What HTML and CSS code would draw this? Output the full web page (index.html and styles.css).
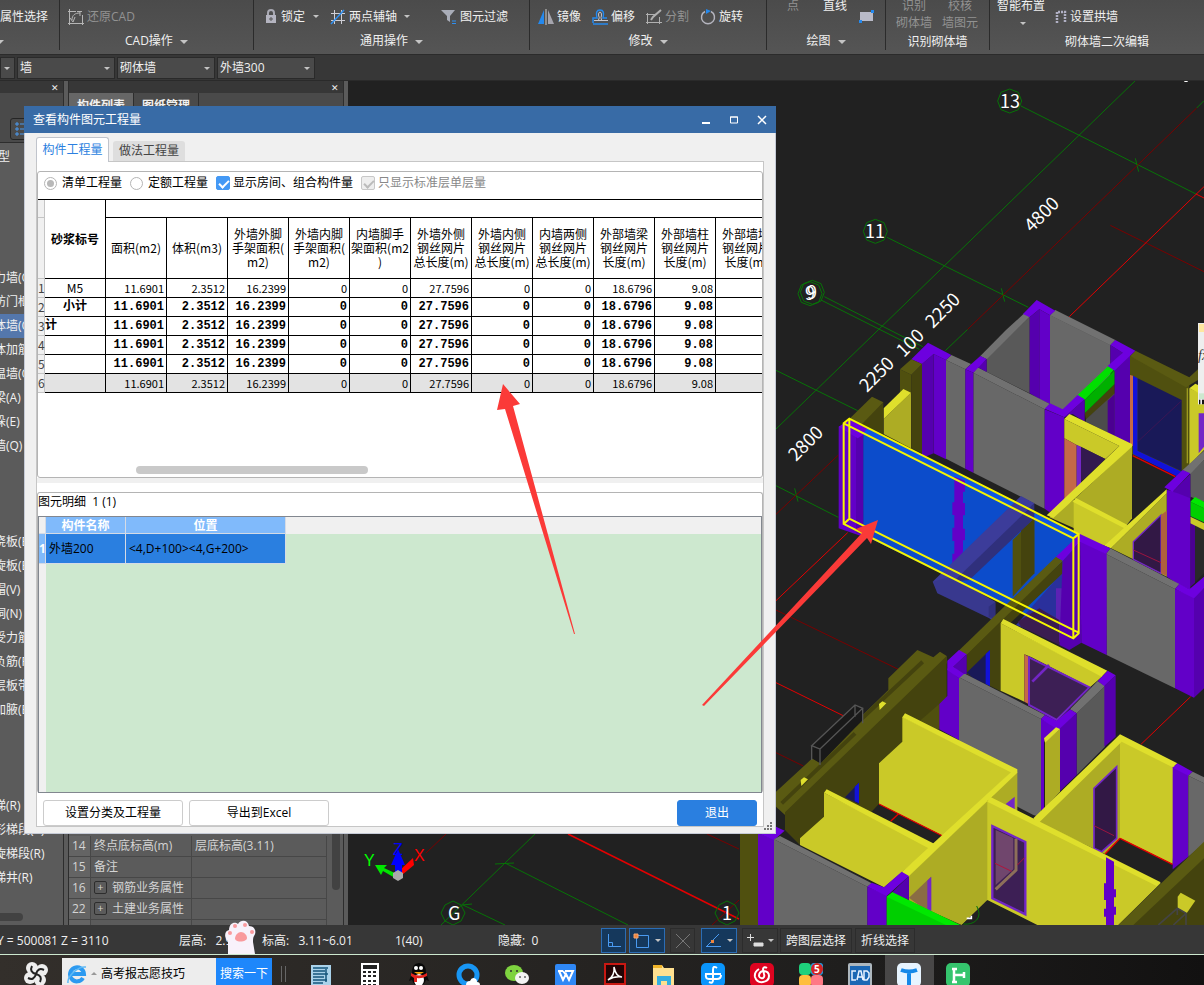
FILE: index.html
```html
<!DOCTYPE html>
<html lang="zh-CN">
<head>
    <meta charset="UTF-8">
    <meta name="viewport" content="width=device-width, initial-scale=1.0">
    <title>查看构件图元工程量</title>
    <link rel="stylesheet" href="styles.css">
</head>
<body>
    <!-- 顶部功能区 -->
    <header class="ribbon">
        <section class="group group-select">
            <div class="tools"><button class="tool">属性选择</button></div>
            <div class="group-title"><i class="caret"></i></div>
        </section>
        <section class="group group-cad">
            <div class="tools">
                <button class="tool" disabled>
                    <svg width="16" height="16" viewBox="0 0 16 16" fill="none" stroke="#b5b5b5" stroke-width="1"><path d="M1.500 0v16M0 2.500h8M0 14.500h16M14.500 6v10M9 2.500h5"/><path d="M4 11c0-5 3-7 8-7M2 9l3 4 2-5M12 2v5"/></svg>
                    还原CAD
                </button>
            </div>
            <div class="group-title">CAD操作 <i class="caret"></i></div>
        </section>
        <section class="group group-common">
            <div class="tools">
                <button class="tool tool-lock">
                    <svg width="12" height="16" viewBox="0 0 12 16"><path d="M3 7V4a3 3 0 0 1 6 0v3" fill="none" stroke="#a9a9b3" stroke-width="2"/><rect x="1" y="6" width="10" height="8" fill="#b4b4c0"/><path d="M6 8v4M4 10h4" stroke="#555"/></svg>
                    锁定 <i class="caret small"></i>
                </button>
                <button class="tool">
                    <svg width="16" height="16" viewBox="0 0 16 16" fill="none"><path d="M4.500 1v14M11.500 1v14M1 4.500h14M1 11.500h14" stroke="#cfcfd6"/><path d="M1 15L14 1" stroke="#2f8ff0" stroke-width="1.500"/></svg>
                    两点辅轴 <i class="caret small"></i>
                </button>
                <button class="tool tool-filter">
                    <svg width="16" height="16" viewBox="0 0 16 16"><path d="M0 1h14L9 7v6l-3-2V7z" fill="#a9adb8"/><path d="M11 12h4M11 14.500h4" stroke="#2f8ff0"/></svg>
                    图元过滤
                </button>
            </div>
            <div class="group-title">通用操作 <i class="caret"></i></div>
        </section>
        <section class="group group-modify">
            <div class="tools">
                <button class="tool">
                    <svg width="16" height="16" viewBox="0 0 16 16"><path d="M6 1v14H0z" fill="#2489ee"/><path d="M10 1v14h6z" fill="#a5a5ae"/><path d="M8 0v16" stroke="#ccc"/></svg>
                    镜像
                </button>
                <button class="tool">
                    <svg width="16" height="16" viewBox="0 0 16 16" fill="none"><path d="M1 14V9h4Q3 1 8 1t3 8h4M1 15h15" stroke="#2489ee" stroke-width="1.500"/><path d="M2 11.500h14M6.500 11Q8 9 6.500 6q0-3 1.500-3t1.500 3q-1 3 0 5" stroke="#c8c8d0"/></svg>
                    偏移
                </button>
                <button class="tool" disabled>
                    <svg width="16" height="16" viewBox="0 0 16 16" fill="none" stroke="#b0b0b0"><path d="M1.500 4v11M0 5.500h9M0 13.500h16M13.500 8v7"/><path d="M5 11l2-3 8-7" stroke-width="2"/></svg>
                    分割
                </button>
                <button class="tool">
                    <svg width="16" height="16" viewBox="0 0 16 16" fill="none"><path d="M11 2.500a6.500 6.500 0 1 1-6 0" stroke="#b4b4be" stroke-width="1.500"/><path d="M6 0l5 2-5 3z" fill="#2489ee"/></svg>
                    旋转
                </button>
            </div>
            <div class="group-title">修改 <i class="caret"></i></div>
        </section>
        <section class="group group-draw">
            <div class="tools">
                <button class="tool tall" disabled>点</button>
                <button class="tool tall">直线</button>
                <button class="tool" aria-label="矩形">
                    <svg width="16" height="16" viewBox="0 0 16 16"><rect x="1" y="3" width="13" height="9" fill="#b9bac8"/><path d="M12 1h3v3h-3zM0 11h3v3H0z" fill="#2489ee"/></svg>
                </button>
            </div>
            <div class="group-title">绘图 <i class="caret"></i></div>
        </section>
        <section class="group group-detect">
            <div class="tools">
                <button class="tool tall" disabled>识别<br>砌体墙</button>
                <button class="tool tall" disabled>校核<br>墙图元</button>
            </div>
            <div class="group-title low">识别砌体墙</div>
        </section>
        <section class="group group-edit">
            <div class="tools">
                <button class="tool tall">智能布置<br><i class="caret small"></i></button>
                <button class="tool">
                    <svg width="12" height="14" viewBox="0 0 12 14"><path d="M2 13V2h8v11" fill="none" stroke="#b0b0c4" stroke-width="2.500" stroke-dasharray="2 1"/></svg>
                    设置拱墙
                </button>
            </div>
            <div class="group-title low">砌体墙二次编辑</div>
        </section>
    </header>

    <nav class="selector-bar">
        <label class="selector selector-floor"><select aria-label="楼层"><option></option></select></label>
        <label class="selector"><select aria-label="类别"><option>墙</option></select></label>
        <label class="selector"><select aria-label="构件类型"><option>砌体墙</option></select></label>
        <label class="selector"><select aria-label="构件"><option>外墙300</option></select></label>
    </nav>

    <main class="workspace">
        <!-- 左侧构件导航 -->
        <aside class="nav-panel">
            <div class="panel-head"><button class="panel-close" aria-label="关闭">✕</button></div>
            <div class="nav-tools">
                <button class="view-button" aria-label="列表">
                    <svg width="16" height="14" viewBox="0 0 16 14" stroke="#4a9af0" fill="none"><path d="M1 1h2v2H1zM1 6h2v2H1zM1 11h2v2H1zM5 2h9M5 7h9M5 12h9"/></svg>
                </button>
            </div>
            <div class="nav-title">常用类型</div>
            <ul class="nav-list">
                <li>剪力墙(Q)</li>
                <li>人防门框墙</li>
                <li class="active">砌体墙(Q)</li>
                <li>砌体加筋(Y)</li>
                <li>保温墙(Q)</li>
                <li>暗梁(A)</li>
                <li>墙垛(E)</li>
                <li>幕墙(Q)</li>
            </ul>
            <ul class="nav-list">
                <li>现浇板(B)</li>
                <li>螺旋板(B)</li>
                <li>柱帽(V)</li>
                <li>板洞(N)</li>
                <li>板受力筋(S)</li>
                <li>板负筋(F)</li>
                <li>楼层板带(H)</li>
                <li>板加腋(B)</li>
            </ul>
            <ul class="nav-list">
                <li>楼梯(R)</li>
                <li>直形梯段(R)</li>
                <li>螺旋梯段(R)</li>
                <li>楼梯井(R)</li>
            </ul>
            <div class="nav-scroll"></div>
        </aside>

        <!-- 属性面板 -->
        <aside class="prop-panel">
            <div class="panel-head"><button class="panel-close" aria-label="关闭">✕</button></div>
            <div class="prop-tabs">
                <button class="prop-tab">构件列表</button>
                <button class="prop-tab current">图纸管理</button>
            </div>
            <div class="prop-body">
                <table class="prop-table">
                    <tr><th>14</th><td>终点底标高(m)</td><td>层底标高(3.11)</td></tr>
                    <tr><th>15</th><td>备注</td><td></td></tr>
                    <tr><th>16</th><td><button class="expand">+</button>钢筋业务属性</td><td></td></tr>
                    <tr><th>22</th><td><button class="expand">+</button>土建业务属性</td><td></td></tr>
                    <tr class="cut"><th></th><td></td><td></td></tr>
                </table>
                <div class="prop-scroll"></div>
            </div>
        </aside>

        <!-- 三维视图 -->
        <div class="viewport">
            <svg class="scene" viewBox="348 81 856 844" preserveAspectRatio="xMinYMin slice">
                <!-- 左下轴网 -->
                <g fill="none" stroke="#077307">
                    <path d="M535 834L441 925M505 863l123 62M463 905l42 20M495 864l19-1M462 905l10-1"/>
                    <path d="M568 834l171 85" stroke="#e40000" stroke-width="1.500"/>
                    <path d="M446 834l-20 19M707 834l32 15M739 900l-27 25" stroke="#7a0000"/>
                    <path d="M453 901l8 4 4 8-4 8-8 4-8-4-4-8 4-8zM727 901l8 4 4 8-4 8-8 4-8-4-4-8 4-8z"/>
                </g>
                <!-- 坐标轴 -->
                <path d="M375 865l12 0-3 3 13 6-2 4-12-7-2 4z" fill="#00e600"/>
                <path d="M413 858l-14 13 3 4 12-10z" fill="#f00"/>
                <path d="M398 849l-7 16h4v8h7v-8h3z" fill="#00f"/>
                <path d="M393 873l5-3 5 3v5l-5 3-5-3z" fill="#aaa"/>
                <g class="axis-name">
                    <text x="364" y="866" fill="#0f0">Y</text>
                    <text x="393" y="855" fill="#00f">Z</text>
                    <text x="414" y="861" fill="#f00">X</text>
                </g>

                <svg x="740" y="80" width="464" height="845" viewBox="-108 -600 1392 2535">
                    <!-- 轴线 -->
                    <g fill="none" stroke="#077307" stroke-width="3">
                        <path d="M1080-600L0 447M735-522L1260-258M333-128L757 82M145 50L440 200M135 60L430 208M0 271L245 392M0 617L187 712M575 148L508 212M1262-516L1284-538"/>
                        <path d="M1078-365l10 40M676 25l10 40M56 625l10 40"/>
                        <path d="M701-573l26 10 10 26-10 26-26 10-26-10-10-26 10-26zM298-182l26 10 10 26-10 26-26 10-26-10-10-26 10-26zM102 5l26 10 10 26-10 26-26 10-26-10-10-26 10-26zM109 1l26 10 10 26-10 26-26 10-26-10-10-26 10-26z"/>
                        <path d="M1262-516L575 148M187 525L0 703M1003-164L1284-25M0 990l367 178M0 1418l82 40" stroke="#7a0000"/>
                        <path d="M1284-280L880 110M1260-258L1284-246M215 758L0 962M0 1208l232 114M1244 1250l-149 143" stroke="#e40000"/>
                    </g>
                    <path d="M1222-600h16l-4 6h-8z" fill="#fff"/>

                    <!-- 后排房间 -->
                    <path d="M632 235L761 110V340L632 275z" fill="#595959"/>
                    <path d="M613 228L690 150 745 100 761 110 632 238z" fill="#717171"/>
                    <path d="M822 105L1003 195V300L860 390 822 372z" fill="#686868"/>
                    <path d="M838 90L1018 180 1003 196 822 106z" fill="#717171"/>
                    <path d="M782 60L838 92 822 106 790 88 761 112 741 102z" fill="#6d00df"/>
                    <path d="M761 112L790 88V357L761 340z" fill="#5500ae"/>
                    <path d="M790 88L822 106V372L790 357z" fill="#6200c8"/>
                    <path d="M592 278L806 388V686L592 578zM510 240L568 268V566L510 536z" fill="#686868"/>
                    <path d="M605 262L822 372 806 388 592 278zM526 225L585 252 568 268 510 240z" fill="#717171"/>
                    <path d="M605 262L632 238V276z" fill="#5500ae"/>
                    <path d="M568 268L613 228 632 237 592 278z" fill="#6d00df"/>
                    <path d="M568 268L592 278V578L568 566zM473 222L510 240V538L473 520z" fill="#6200c8"/>
                    <path d="M438 252L473 222V520L438 535z" fill="#5500ae"/>
                    <path d="M456 188L526 225 510 240 473 222 438 252 406 238z" fill="#6d00df"/>
                    <path d="M372 268L406 284V505L372 490z" fill="#50500f"/>
                    <path d="M406 284L438 252V520L406 505z" fill="#44430e"/>
                    <path d="M406 238L438 252 406 284 372 268z" fill="#5a5a12"/>
                    <path d="M323 417L405 338V505L323 462z" fill="#adac24"/>
                    <path d="M382 327L405 338 323 417V385z" fill="#dfdf2c"/>
                    <path d="M322 367V462L255 432z" fill="#44430e"/>
                    <path d="M288 350L322 367 255 435 222 415z" fill="#5a5a12"/>

                    <!-- 右上门窗 -->
                    <path d="M1062 228L1240 300V560L1215 590 1062 520z" fill="#50500f"/>
                    <path d="M1078 212L1240 292 1266 268V300L1230 322 1062 228z" fill="#5a5a12"/>
                    <path d="M1062 285l9 2v212l-9-4z" fill="#c46947"/>
                    <path d="M1071 287L1085 295V512L1217 575 1205 590 1071 522z" fill="#1212d8"/>
                    <path d="M1085 295L1217 360V574L1085 512z" fill="#191958"/>
                    <path d="M1085 485L1217 362" stroke="#4b1452" stroke-width="2"/>
                    <path d="M1240 325L1284 345V510L1240 555z" fill="#cac928"/>
                    <path d="M1234 325v225" stroke="#9c9b20" stroke-width="4"/>
                    <path d="M1240 325l18-14 26 12v25z" fill="#dfdf2c"/>
                    <path d="M1268 400h16v100l-16 20z" fill="#7326c6"/>
                    <path d="M1070 527L1198 590 1070 712z" fill="#212121"/>
                    <path d="M1070 527L1198 590" stroke="#e40000" stroke-width="4"/>
                    <path d="M926 400L1016 312V345L930 418z" fill="#44430e"/>
                    <path d="M930 418L1016 340V468L930 425z" fill="#4c4c4c"/>
                    <path d="M995 362L1016 342V468L995 460z" fill="#4b0091"/>
                    <path d="M926 360L1016 270V312L926 400z" fill="#00b000"/>
                    <path d="M997 258L1016 268 926 360 905 345z" fill="#00e000"/>
                    <path d="M1003 195L1040 218 1003 258zM1016 272L1062 226V490L1016 470z" fill="#5500ae"/>
                    <path d="M1018 180L1078 212 1016 272 995 258 1040 218 1003 195z" fill="#6d00df"/>
                    <path d="M806 388L865 412V670L820 696 806 686z" fill="#6200c8"/>
                    <path d="M865 412L926 358V425L890 402z" fill="#5500ae"/>
                    <path d="M822 370L860 388 905 345 926 358 865 412 806 386z" fill="#6d00df"/>

                    <!-- 中部黄色隔墙 -->
                    <path d="M865 417L1030 498 988 537 902 495 865 475z" fill="#cac928"/>
                    <path d="M865 475L902 495V625L865 660z" fill="#c46947"/>
                    <path d="M902 495L915 500V615L902 625z" fill="#7326c6"/>
                    <path d="M915 500L988 537 915 605z" fill="#33194f"/>
                    <path d="M1068 497V715L1050 738 895 658z" fill="#adac24"/>
                    <path d="M820 712L895 658V745z" fill="#adac24"/>
                    <path d="M893 662L1050 740 1000 800 893 775z" fill="#cac928"/>
                    <path d="M880 402L1068 492V500L832 714 812 706 1030 498 865 417zM900 654L1055 735 1045 745 890 665z" fill="#dfdf2c"/>

                    <!-- 右侧 -->
                    <path d="M1243 580L1284 540V665L1243 650z" fill="#5d5d5d"/>
                    <path d="M1220 570L1284 512V540L1243 582z" fill="#717171"/>
                    <path d="M1243 705L1284 725V880L1243 920z" fill="#292929"/>
                    <path d="M1243 720l14 8v180l-14 12z" fill="#4b0091"/>
                    <path d="M1243 710l41 20v20l-41-20z" fill="#cac928"/>
                    <path d="M1243 665L1284 685V727L1243 708z" fill="#00cf00"/>
                    <path d="M1243 665l14-14 27 14v20z" fill="#00e800"/>
                    <path d="M1172 630L1243 640V930L1210 915 1172 890z" fill="#6200c8"/>
                    <path d="M1190 635L1243 582V655L1205 640z" fill="#5500ae"/>
                    <path d="M1220 570L1243 580 1190 635 1165 622z" fill="#6d00df"/>
                    <path d="M1172 640V890L1072 838 1005 805z" fill="#adac24"/>
                    <path d="M1072 785L1155 705V880L1072 838z" fill="#321845" stroke="#7326c6" stroke-width="4"/>
                    <path d="M1072 810L1155 848" stroke="#9b1440" stroke-width="3"/>
                    <path d="M1155 705L1172 692V888L1155 880z" fill="#b0603e"/>
                    <path d="M1172 628V640L1005 805 985 797z" fill="#dfdf2c"/>
                    <path d="M990 822L1197 927V1225L992 1125z" fill="#686868"/>
                    <path d="M1003 805L1210 912 1197 927 990 822z" fill="#717171"/>
                    <path d="M1197 927L1254 950V1253L1197 1225z" fill="#6200c8"/>
                    <path d="M1254 950L1284 925V1225L1254 1253z" fill="#5500ae"/>
                    <path d="M1210 912L1240 928 1284 890V925L1254 955 1197 927z" fill="#6d00df"/>

                    <!-- 选中的外墙 -->
                    <path d="M188 440L222 425 262 455V770L188 745z" fill="#6200c8"/>
                    <path d="M240 455l22 5v300h-22z" fill="#5500ae"/>
                    <path d="M188 440L222 418 285 450 245 475z" fill="#6d00df"/>
                    <path d="M262 460L892 775V1075L262 765z" fill="#0c4ccb"/>
                    <path d="M275 445L905 762 892 777 262 460z" fill="#0e58e4"/>
                    <path d="M535 590l32 12v33h-6v34h6v37h-6v40h6v35h-6v35l-32 45v-40h6v-38h-6v-40h6v-38h-6v-38h6z" fill="#6200c8"/>
                    <path d="M710 780L775 715V880L710 950z" fill="#50500f"/>
                    <path d="M735 750l40-35v165l-40 38z" fill="#44430e"/>
                    <path d="M775 670V715L580 900 520 905z" fill="#30307c"/>
                    <path d="M735 648L775 670 525 912 470 905z" fill="#3c3c9a"/>
                    <path d="M470 905L525 890 658 965V1030L640 1015 484 940z" fill="#38388e"/>
                    <path d="M638 980l20-14v50l-20-5z" fill="#30307c"/>
                    <path d="M860 875V1090L720 1035z" fill="#2a309c"/>
                    <path d="M840 925h20v165l-20-10z" fill="#5c22b4"/>
                    <path d="M725 1025L790 985 850 1020V1095L735 1040z" fill="#3a1c50"/>
                    <path d="M860 842V880L700 1032 680 1230 572 1180V1110z" fill="#44430e"/>
                    <path d="M840 830L860 842 572 1125 548 1112z" fill="#5a5a12"/>
                    <path d="M860 842L912 785 916 1088 880 1110 850 1095z" fill="#5500ae"/>
                    <path d="M912 775L992 822V1125L916 1088z" fill="#6200c8"/>
                    <path d="M912 762L1003 805 990 822 912 785 860 842 840 830z" fill="#6d00df"/>
                    <g fill="none" stroke="#f5f500" stroke-width="6">
                        <path d="M203 430L220 416 908 762V1060L892 1075 203 732zM203 430L892 775V1075M892 775L908 762M220 416V716L908 1058M203 732L220 716"/>
                    </g>

                    <!-- 下部楼层 -->
                    <g transform="translate(-108 960)">
                        <path d="M680 165L785 62V275L680 222z" fill="#44430e"/>
                        <path d="M680 218L750 150V258L700 235z" fill="#191958"/>
                        <path d="M737 162L750 150V258L737 252z" fill="#1212d8"/>
                        <path d="M532 150L580 172 600 155 620 168V190L135 645 108 620V575L217 475 238 488 368 345 445 270V235z" fill="#5a5a12"/>
                        <path d="M620 168V295L598 385 417 490V612L395 635 180 735 135 690V637z" fill="#44430e"/>
                        <path d="M598 312V390L540 362z" fill="#50500f"/>
                        <path d="M548 185L345 375M345 400L125 610" stroke="#44430e" stroke-width="12"/>
                        <path d="M417 312l10-8 12 6-20 20zM182 540l10-8 12 6-20 20z" fill="#dfdf2c"/>
                        <path d="M215 437L345 315 368 325V360L242 490 215 475z" fill="#191919"/>
                        <path d="M215 437L345 315 368 325 240 447zM215 437V480M240 447V495M345 315V350M368 325V370" fill="none" stroke="#555" stroke-width="4"/>

                        <path d="M782 70L1088 228 1050 262 875 172 853 163V305L782 272z" fill="#cac928"/>
                        <path d="M790 57L1102 212 1085 230 782 70z" fill="#dfdf2c"/>
                        <path d="M853 163l14 8v142l-14-8z" fill="#c46947"/>
                        <path d="M867 172L1048 262 950 360 867 315z" fill="#3d1f55" stroke="#7326c6" stroke-width="6"/>
                        <path d="M877 245l50-50" stroke="#7326c6" stroke-width="8"/>
                        <path d="M657 232L903 357V652L880 645 657 530z" fill="#686868"/>
                        <path d="M672 220L915 345 903 357 657 232z" fill="#717171"/>
                        <path d="M622 205L657 235V420L598 388V312L622 288z" fill="#6200c8"/>
                        <path d="M640 200L680 163V222H665z" fill="#5500ae"/>
                        <path d="M657 150L680 163 640 200 672 222 657 235 622 210V182z" fill="#6d00df"/>
                        <path d="M1010 340L1095 258V440L1010 525z" fill="#595959"/>
                        <path d="M1073 243L1095 258 1010 340 990 328z" fill="#717171"/>
                        <path d="M1093 258L1127 226V410L1093 440zM955 388L1010 340V525L958 575z" fill="#5500ae"/>
                        <path d="M903 357L958 385 912 425V630L903 630z" fill="#6200c8"/>
                        <path d="M1103 212L1127 226 1093 258 1073 243zM915 345L950 362 990 328 1010 340 955 390 903 357z" fill="#6d00df"/>
                        <path d="M915 425L960 387V575L915 625z" fill="#adac24"/>
                        <path d="M948 382L960 387 915 428 912 415z" fill="#dfdf2c"/>

                        <path d="M398 632L417 612 608 708 585 732z" fill="#212121"/>
                        <path d="M487 350L815 515 610 708 417 612V490L487 425z" fill="#cac928"/>
                        <path d="M417 612L608 708M475 642L452 664" stroke="#e40000" stroke-width="4"/>
                        <path d="M745 600L832 515V632L810 628z" fill="#adac24"/>
                        <path d="M797 612L824 590V630z" fill="#7326c6"/>
                        <path d="M315 592L357 548V612z" fill="#191958"/>
                        <path d="M344 560l13-12v62l-13-6z" fill="#1212d8"/>
                        <path d="M252 578L575 742 432 862 180 735V715L252 650z" fill="#cac928"/>
                        <path d="M260 568L590 735 570 747 252 578z" fill="#dfdf2c"/>
                        <path d="M505 828L745 600V900L665 975 507 905z" fill="#adac24"/>
                        <path d="M507 893L573 830V935L545 922z" fill="#8a6c44"/>
                        <path d="M562 842l12-12v104l-12-6z" fill="#7326c6"/>
                        <path d="M495 340L832 508V518L505 830 485 817 812 517 487 352z" fill="#dfdf2c"/>

                        <path d="M0 700H54V975H0z" fill="#50500f"/>
                        <path d="M54 700L102 718V975H54z" fill="#6200c8"/>
                        <path d="M108 680L134 692 102 720 54 700z" fill="#6d00df"/>
                        <path d="M102 718L382 860V975H102z" fill="#686868"/>
                        <path d="M120 708L395 850 382 860 102 718z" fill="#717171"/>
                        <path d="M382 860L440 885V975H382z" fill="#6200c8"/>
                        <path d="M455 878L507 828V900L460 880z" fill="#5500ae"/>
                        <path d="M395 848L432 862 485 815 507 828 440 888 382 860z" fill="#6d00df"/>
                        <path d="M440 890L457 877 660 975H440z" fill="#00cf00"/>
                        <path d="M440 890L457 877 660 975H618z" fill="#00e800"/>

                        <!-- 右侧房间 -->
                        <path d="M885 662L1140 415V715L1095 762z" fill="#adac24"/>
                        <path d="M1140 415L1310 500 1298 793 1140 715z" fill="#cac928"/>
                        <path d="M1140 403L1312 490 1298 502 1145 425 895 670 880 655z" fill="#dfdf2c"/>
                        <path d="M1062 565L1130 500V715L1085 755 1062 745z" fill="#321845" stroke="#7326c6" stroke-width="5"/>
                        <path d="M1062 677l60 30" stroke="#9b1440" stroke-width="3"/>
                        <path d="M1140 715L1298 793 1262 848 1095 762z" fill="#212121"/>
                        <path d="M1140 715L1298 793M1140 715L1095 762" stroke="#e40000" stroke-width="4"/>
                        <path d="M1298 500L1345 525V770L1298 808z" fill="#6200c8"/>
                        <path d="M1312 490L1358 515 1345 527 1298 503z" fill="#6d00df"/>
                        <path d="M1345 527L1392 550V730L1345 770z" fill="#686868"/>
                        <path d="M1358 515L1392 532V550L1345 527z" fill="#717171"/>
                        <path d="M742 900L892 975H665z" fill="#212121"/>
                        <path d="M742 600L1100 775 1262 850 1135 975H892L742 900z" fill="#cac928"/>
                        <path d="M750 590L1262 847 1250 858 742 605z" fill="#dfdf2c"/>
                        <path d="M757 678L856 726V943L757 895z" fill="#3d1f55" stroke="#7326c6" stroke-width="7"/>
                        <path d="M767 690L820 714V808L767 855z" fill="#70466d"/>
                        <path d="M828 716V810L767 868" fill="none" stroke="#8d6f5a" stroke-width="9"/>
                        <path d="M765 790l50 24M832 795l22-22" stroke="#b0143c" stroke-width="3"/>
                        <path d="M1098 772L1122 785V868h6v24h-6v28h6v24h-6v31H1098V950h-6v-24h6v-26h-6v-50h6z" fill="#6200c8"/>
                        <path d="M1392 725V975H1135z" fill="#5a5a12"/>
                        <path d="M1392 775V975H1180z" fill="#44430e"/>
                        <path d="M1313 890L1322 878 1366 902 1340 940 1313 925z" fill="#cac928"/>
                        <path d="M1255 975L1312 925 1338 940V975M1312 925V945M1338 940L1300 975" fill="none" stroke="#444" stroke-width="5"/>
                        <path d="M710 918q14 25 0 42-15 15-40 12" fill="none" stroke="#077307" stroke-width="3"/>
                        <path d="M680 955h14v-8" fill="none" stroke="#fff" stroke-width="5"/>
                    </g>
                    <!-- 右侧浮窗边缘 -->
                    <path d="M1266 129h18v244h-18z" fill="#eee"/>
                    <path d="M1269 132h15v24h-15z" fill="#ffe7a0"/>
                    <path d="M1269 340h15v17h-15z" fill="#cde8cf"/>
                    <path d="M1269 359h4v14h-4zM1278 359h6v14h-6z" fill="#111"/>
                </svg>
                <g class="dimension">
                    <text x="1000" y="108">13</text>
                    <text x="865" y="238">11</text>
                    <text x="805" y="300">9</text>
                    <text x="807" y="299">9</text>
                    <text x="448" y="920">G</text>
                    <text x="722" y="920">1</text>
                    <text x="1198" y="360" class="tip-text">fx</text>
                    <text transform="translate(1032 233) rotate(-45)">4800</text>
                    <text transform="translate(933 329) rotate(-45)">2250</text>
                    <text transform="translate(904 358) rotate(-45)">100</text>
                    <text transform="translate(867 393) rotate(-45)">2250</text>
                    <text transform="translate(796 462) rotate(-45)">2800</text>
                </g>
            </svg>
        </div>

        <!-- 工程量对话框 -->
        <section class="dialog" role="dialog" aria-labelledby="dialog-title">
            <div class="title-bar">
                <h1 id="dialog-title">查看构件图元工程量</h1>
                <button class="window-button" aria-label="最小化"><svg width="10" height="10"><path d="M1 8h8" stroke="#fff" stroke-width="2"/></svg></button>
                <button class="window-button" aria-label="最大化"><svg width="10" height="10"><path d="M1.500 2v6h7V2zM1 2h8" fill="none" stroke="#fff"/></svg></button>
                <button class="window-button" aria-label="关闭"><svg width="10" height="10"><path d="M1 1l8 8M9 1L1 9" stroke="#fff" stroke-width="1.500"/></svg></button>
            </div>
            <div class="tabs">
                <button class="tab current">构件工程量</button>
                <button class="tab">做法工程量</button>
            </div>
            <div class="page">
                <div class="pane quantity-pane">
                    <div class="options">
                        <label><input type="radio" name="kind" checked>清单工程量</label>
                        <label><input type="radio" name="kind">定额工程量</label>
                        <label><input type="checkbox" checked>显示房间、组合构件量</label>
                        <label class="off"><input type="checkbox" checked disabled>只显示标准层单层量</label>
                    </div>
                    <div class="quantity-scroll">
                        <table class="quantity">
                            <colgroup><col class="index-col"><col span="12"></colgroup>
                            <thead>
                                <tr class="band"><th class="index"></th><th rowspan="2" class="grade">砂浆标号</th><th colspan="11"></th></tr>
                                <tr class="names">
                                    <th class="index"></th>
                                    <th>面积(m2)</th>
                                    <th>体积(m3)</th>
                                    <th>外墙外脚<br>手架面积(<br>m2)</th>
                                    <th>外墙内脚<br>手架面积(<br>m2)</th>
                                    <th>内墙脚手<br>架面积(m2<br>)</th>
                                    <th>外墙外侧<br>钢丝网片<br>总长度(m)</th>
                                    <th>外墙内侧<br>钢丝网片<br>总长度(m)</th>
                                    <th>内墙两侧<br>钢丝网片<br>总长度(m)</th>
                                    <th>外部墙梁<br>钢丝网片<br>长度(m)</th>
                                    <th>外部墙柱<br>钢丝网片<br>长度(m)</th>
                                    <th>外部墙墙<br>钢丝网片<br>长度(m)</th>
                                </tr>
                            </thead>
                            <tbody>
                                <tr><th class="index">1</th><td class="name">M5</td><td>11.6901</td><td>2.3512</td><td>16.2399</td><td>0</td><td>0</td><td>27.7596</td><td>0</td><td>0</td><td>18.6796</td><td>9.08</td><td></td></tr>
                                <tr class="sum"><th class="index">2</th><td class="name">小计</td><td>11.6901</td><td>2.3512</td><td>16.2399</td><td>0</td><td>0</td><td>27.7596</td><td>0</td><td>0</td><td>18.6796</td><td>9.08</td><td></td></tr>
                                <tr class="sum"><th class="index">3</th><td class="name start">计</td><td>11.6901</td><td>2.3512</td><td>16.2399</td><td>0</td><td>0</td><td>27.7596</td><td>0</td><td>0</td><td>18.6796</td><td>9.08</td><td></td></tr>
                                <tr class="sum"><th class="index">4</th><td></td><td>11.6901</td><td>2.3512</td><td>16.2399</td><td>0</td><td>0</td><td>27.7596</td><td>0</td><td>0</td><td>18.6796</td><td>9.08</td><td></td></tr>
                                <tr class="sum"><th class="index">5</th><td></td><td>11.6901</td><td>2.3512</td><td>16.2399</td><td>0</td><td>0</td><td>27.7596</td><td>0</td><td>0</td><td>18.6796</td><td>9.08</td><td></td></tr>
                                <tr class="total"><th class="index">6</th><td></td><td>11.6901</td><td>2.3512</td><td>16.2399</td><td>0</td><td>0</td><td>27.7596</td><td>0</td><td>0</td><td>18.6796</td><td>9.08</td><td></td></tr>
                            </tbody>
                        </table>
                    </div>
                    <div class="scroll-thumb"></div>
                </div>
                <div class="splitter"></div>
                <div class="pane detail-pane">
                    <div class="detail-title">图元明细&nbsp; 1 (1)</div>
                    <div class="detail-box">
                        <table class="detail">
                            <tr><th class="index"></th><th class="part">构件名称</th><th class="place">位置</th></tr>
                            <tr class="picked"><th class="index">1</th><td>外墙200</td><td>&lt;4,D+100&gt;&lt;4,G+200&gt;</td></tr>
                        </table>
                    </div>
                </div>
                <div class="actions">
                    <button class="action">设置分类及工程量</button>
                    <button class="action">导出到Excel</button>
                    <button class="action primary">退出</button>
                </div>
            </div>
            <svg class="grip" width="9" height="9" fill="#777"><path d="M6 0h2v2H6zM3 3h2v2H3zM6 3h2v2H6zM0 6h2v2H0zM3 6h2v2H3zM6 6h2v2H6z"/></svg>
        </section>

        <!-- 红色指示箭头 -->
        <svg class="arrows" viewBox="0 81 1204 844" preserveAspectRatio="xMinYMin meet" fill="#fb3a38">
            <path d="M503 384l17 20-7 2 62 228h-1L505 409l-8 1z"/>
            <path d="M878 520l-7 24-4-6-163 168-2-1 160-172-6-4z"/>
        </svg>
    </main>

    <!-- 状态栏 -->
    <footer class="status-bar">
        <div class="status-text">
            <span class="coords">Y = 500081 Z = 3110</span>
            <span>层高:&nbsp;&nbsp; 2.9</span>
            <span>标高:&nbsp;&nbsp; 3.11~6.01</span>
            <span>1(40)</span>
            <span>隐藏:&nbsp; 0</span>
        </div>
        <button class="mode on" aria-label="正交"><svg width="16" height="16" fill="none" stroke="#4a9af0"><path d="M2.500 1v12.500H15M2.500 9.500h4v4"/></svg></button>
        <button class="mode on wide" aria-label="捕捉"><svg width="18" height="16" fill="none" stroke="#4a9af0"><path d="M3.500 2.500h12v12h-12z"/><path d="M1 1h4v4H1z" fill="#f0853c" stroke="#f5a570"/></svg><i class="caret small"></i></button>
        <button class="mode" aria-label="交点"><svg width="16" height="16" stroke="#777"><path d="M1 1l14 14M15 1L1 15"/></svg></button>
        <button class="mode on wide" aria-label="角度"><svg width="18" height="16" stroke="#4a9af0"><path d="M1 13.500h15M2 13L14 1"/><path d="M6 7h3v3H6z" fill="#f0853c" stroke="none"/></svg><i class="caret small"></i></button>
        <button class="mode wide" aria-label="动态输入"><svg width="18" height="16" stroke="#ddd"><path d="M1 4.500h7M4.500 1v7"/><path d="M8 10h9v3H8z" fill="#ddd"/></svg><i class="caret small"></i></button>
        <button class="mode label">跨图层选择</button>
        <button class="mode label">折线选择</button>
        <svg class="paw" width="32" height="34" viewBox="0 0 32 34">
            <path d="M3 34V21C-1 18-1 11 4 10 4 3 10 1 13 4c3-5 10-4 11 2 6 0 8 6 5 10-1 2-1 3-1 6l2 12z" fill="#f8f2fb"/>
            <path d="M10 19c0-4 3-7 6-7s6 3 6 6c0 4-10 5-12 1z" fill="#f99a9d"/>
            <circle cx="5" cy="13" r="2" fill="#f99a9d"/><circle cx="10" cy="6" r="2" fill="#f99a9d"/><circle cx="20" cy="5" r="2" fill="#f99a9d"/><circle cx="27" cy="12" r="2" fill="#f99a9d"/>
        </svg>
    </footer>

    <!-- 任务栏 -->
    <div class="taskbar">
        <a href="#" class="launcher" aria-label="浏览器"><svg width="24" height="24" viewBox="0 0 24 24" fill="#eee"><circle cx="8" cy="6" r="6"/><circle cx="18" cy="8" r="6"/><circle cx="16" cy="18" r="6"/><circle cx="6" cy="16" r="6"/><path d="M12 12Q5 10 8 4M12 12q2-7 8-4M12 12q7 2 4 8M12 12q-2 7-8 4" fill="none" stroke="#222" stroke-width="2"/></svg></a>
        <form class="search">
            <svg width="20" height="20" viewBox="0 0 20 20" fill="none"><path d="M16 13a7 7 0 1 1 1-4H5" stroke="#2c9af0" stroke-width="4"/><path d="M1 18C0 12 10 1 19 2" stroke="#5cb8f5" stroke-width="1.500"/></svg>
            <i class="up"></i>
            <input type="text" value="高考报志愿技巧" aria-label="搜索">
            <button type="button">搜索一下</button>
        </form>
        <div class="divider"></div>
        <div class="apps">
            <a href="#" aria-label="编辑器"><svg width="24" height="24" viewBox="0 0 24 24"><path d="M2 2h20v20H2z" fill="#a9d2ea"/><path d="M4 5h15M4 8h12M4 11h15M4 14h11M4 17h14M4 20h10M17 6v13" stroke="#14567c" stroke-width="1.500"/></svg></a>
            <a href="#" aria-label="计算器"><svg width="24" height="24" viewBox="0 0 24 24"><path d="M3 0h18v24H3z" fill="#fff"/><path d="M5 2h14v4H5zM5 8h3v2H5zM10 8h3v2h-3zM15 8h3v2h-3zM5 12h3v2H5zM10 12h3v2h-3zM15 12h3v2h-3zM5 17h3v2H5zM10 17h3v2h-3zM15 17h3v2h-3zM5 21h3v2H5zM10 21h3v2h-3zM15 21h3v2h-3z" fill="#222"/></svg></a>
            <a href="#" aria-label="QQ"><svg width="24" height="24" viewBox="0 0 24 24"><path d="M5 10Q5 0 12 0t7 10l3 8-3-1q-2 6-7 6t-7-6l-3 1z" fill="#080808"/><ellipse cx="12" cy="17" rx="5" ry="6" fill="#fff"/><circle cx="9" cy="5" r="2" fill="#fff"/><circle cx="14" cy="5" r="2" fill="#fff"/><path d="M7 9h10q-5 4-10 0z" fill="#f5a40c"/><path d="M4 10q8 5 16 0v3q-6 3-10 2v4H7v-4l-3-2z" fill="#e2241d"/></svg></a>
            <a href="#" aria-label="QQ浏览器"><svg width="24" height="24" viewBox="0 0 24 24"><circle cx="12" cy="12" r="9" fill="none" stroke="#1896f4" stroke-width="5"/><path d="M10 22q0-4 4-4 2-5 6-2 1 1 1 3 3 0 3 3v2H12z" fill="#fff"/></svg></a>
            <a href="#" aria-label="微信"><svg width="24" height="24" viewBox="0 0 24 24"><ellipse cx="9" cy="10" rx="9" ry="8" fill="#7ed33f"/><circle cx="6" cy="8" r="1" fill="#333"/><circle cx="12" cy="8" r="1" fill="#333"/><ellipse cx="17" cy="15" rx="7" ry="6" fill="#f4f4f4"/><circle cx="15" cy="14" r="1" fill="#666"/><circle cx="20" cy="14" r="1" fill="#666"/></svg></a>
            <a href="#" aria-label="WPS"><svg width="24" height="24" viewBox="0 0 24 24"><rect x="1" y="1" width="21" height="23" rx="2" fill="#2f88f6"/><path d="M4 8h5M5 8l4 9 3-6 3 6 4-9h-8M9 8l3 4" fill="none" stroke="#fff" stroke-width="2"/></svg></a>
            <a href="#" aria-label="PDF"><svg width="24" height="24" viewBox="0 0 24 24"><path d="M2 1h20v20H2z" fill="#230405" stroke="#c81812" stroke-width="2"/><path d="M5 17Q12 13 11 4q2 10 8 10-8-1-14 3z" fill="none" stroke="#fff" stroke-width="1.500"/></svg></a>
            <a href="#" aria-label="资源管理器"><svg width="24" height="24" viewBox="0 0 24 24"><path d="M1 2h9l2 3h10v17H1z" fill="#ffe190"/><path d="M1 2h9v3H1z" fill="#f0b429"/><path d="M5 13h14v11h-4v-6H9v6H5z" fill="#35aee0"/></svg></a>
            <a href="#" aria-label="加加"><svg width="24" height="24" viewBox="0 0 24 24"><rect width="24" height="24" rx="5" fill="#0a95fb"/><path d="M4 11h16M16 5q-4-3-4 2v10q0 4-4 2M5 11q-1 5 3 5h8q4 0 4-4" fill="none" stroke="#fff" stroke-width="2"/></svg></a>
            <a href="#" aria-label="网易云音乐"><svg width="24" height="24" viewBox="0 0 24 24"><rect width="24" height="24" rx="5" fill="#de0420"/><path d="M9 6Q4 9 5 14q2 6 8 5 6-1 6-6 0-5-6-5-4 1-4 5 1 3 4 2 2-1 1-4l-1-5q1-3 4-1" fill="none" stroke="#fff" stroke-width="2"/></svg></a>
            <a href="#" aria-label="消息"><svg width="24" height="24" viewBox="0 0 24 24"><rect width="12" height="12" rx="4" fill="#1ed17c"/><rect x="12" width="12" height="12" rx="3" fill="#229fe5"/><rect y="12" width="12" height="12" rx="4" fill="#ffbe3e"/><rect x="12" y="12" width="12" height="12" rx="4" fill="#ff7985"/><circle cx="18" cy="6" r="6" fill="#d52424"/><text x="15" y="10" class="badge">5</text></svg></a>
            <a href="#" aria-label="CAD"><svg width="24" height="24" viewBox="0 0 24 24"><rect width="24" height="24" rx="2" fill="#adb7be"/><path d="M2 3h20v21H2z" fill="#1b67b4"/><path d="M8 8H4v9h4M9 17l2-9h2l2 9M10 14h4M16 8v9h3l2-3v-4l-2-2z" fill="none" stroke="#e8f2ff" stroke-width="1.500"/></svg></a>
            <a href="#" class="running" aria-label="算量"><svg width="24" height="24" viewBox="0 0 24 24"><rect width="24" height="24" rx="5" fill="#e7f4ff"/><path d="M4 7q8 3 16 0M12 8v16" fill="none" stroke="#1588e8" stroke-width="4"/></svg></a>
            <a href="#" aria-label="计价"><svg width="24" height="24" viewBox="0 0 24 24"><rect width="24" height="24" rx="5" fill="#35c46d"/><path d="M6 6h5M8 6v13M6 19h5M8 12h11M18 9v6" fill="none" stroke="#fff" stroke-width="2.500"/></svg></a>
        </div>
    </div>
</body>
</html>
```
FILE: styles.css
```css
* {
    box-sizing: border-box;
}

body {
    display: flex;
    flex-direction: column;
    height: 100vh;
    margin: 0;
    overflow: hidden;
    background-color: #212121;
    color: #f0f0f0;
    font-family: "Open Sans", "Noto Sans CJK SC", sans-serif;
    font-size: 12px;
    line-height: 16px;
}

button,
input,
select {
    font: inherit;
    color: inherit;
}

button {
    padding: 0;
    border: none;
    background: none;
}

ul {
    margin: 0;
    padding: 0;
    list-style: none;
}

table {
    border-collapse: separate;
    border-spacing: 0;
    table-layout: fixed;
}

/* 下拉小三角 */
.caret {
    display: inline-block;
    margin-left: 4px;
    border: 4px solid transparent;
    border-top-color: #c4c4c4;
    border-bottom: 0;
    vertical-align: middle;
}

.caret.small {
    border-width: 3px;
    border-bottom: 0;
}

/* ### 功能区 ### */
.ribbon {
    display: flex;
    flex: none;
    height: 55px;
    overflow: hidden;
    background: linear-gradient(#4b4b4b, #555);
    border-bottom: 1px solid #2b2b2b;
}

.group {
    flex: none;
    height: 50px;
    border-right: 1px solid #2b2b2b;
}

.group-select { width: 60px; }
.group-cad { width: 194px; }
.group-common { width: 276px; }
.group-modify { width: 237px; }
.group-draw { width: 119px; }
.group-detect { width: 104px; }
.group-edit { flex: 1 0 234px; border-right: none; }

.tools {
    display: flex;
    height: 33px;
    gap: 10px;
}

.group-cad .tools { padding-left: 8px; }
.group-common .tools { gap: 11px; padding-left: 11px; }
.group-modify .tools { gap: 11px; padding-left: 8px; }
.group-draw .tools { gap: 24px; padding-left: 20px; }
.group-draw .tools .tool:last-child { margin-left: -12px; }
.group-detect .tools { padding-left: 10px; }
.group-edit .tools { padding-left: 7px; }

.tool {
    display: flex;
    align-items: center;
    gap: 3px;
    height: 33px;
    white-space: nowrap;
}

.tool-lock {
    gap: 4px;
}

.tool:disabled {
    color: #929292;
}

.tool.tall {
    display: block;
    align-self: flex-start;
    height: auto;
    margin-top: -3px;
    line-height: 17px;
}

.tool-filter {
    margin-left: 20px;
}

.group-title {
    height: 17px;
    text-align: center;
}

.group-select .group-title {
    text-align: left;
}

.group-select .group-title .caret {
    margin-left: -4px;
}

.group-title.low {
    padding-top: 1px;
}

/* ### 楼层构件选择 ### */
.selector-bar {
    display: flex;
    flex: none;
    gap: 2px;
    height: 26px;
    padding-top: 2px;
    background-color: #373737;
    border-bottom: 1px solid #2a2a2a;
}

.selector {
    position: relative;
    width: 98px;
    height: 22px;
}

.selector-floor {
    width: 15px;
}

.selector select {
    appearance: none;
    width: 100%;
    height: 22px;
    padding: 0 2px;
    border: 1px solid #2a2a2a;
    border-radius: 0;
    background-color: #4a4a4a;
}

.selector::after {
    content: "";
    position: absolute;
    top: 10px;
    right: 5px;
    border: 3px solid transparent;
    border-top-color: #c4c4c4;
    border-bottom: 0;
}

/* ### 工作区 ### */
.workspace {
    position: relative;
    display: flex;
    flex: 1;
    min-height: 0;
    background-color: #5b5b5b;
}

.panel-head {
    flex: none;
    height: 12px;
    background-color: #373737;
    text-align: right;
}

.panel-close {
    display: block;
    margin-left: auto;
    padding-right: 4px;
    font-size: 9px;
    line-height: 13px;
}

.nav-panel {
    position: relative;
    flex: none;
    width: 64px;
    overflow: hidden;
    border-right: 1px solid #2d2d2d;
}

.nav-tools {
    height: 50px;
    padding-top: 25px;
    background-color: #4a4a4a;
    border-bottom: 1px solid #2d2d2d;
}

.view-button {
    width: 30px;
    height: 22px;
    margin-left: 10px;
    border: 1px solid #252525;
    border-radius: 3px;
}

.view-button svg {
    display: block;
    margin-left: 4px;
}

.nav-title {
    height: 123px;
    padding-top: 6px;
    text-indent: -38px;
    white-space: nowrap;
}

.nav-list {
    margin-bottom: 72px;
}

.nav-list li {
    height: 24px;
    line-height: 24px;
    text-indent: -18px;
    white-space: nowrap;
}

.nav-list .active {
    background-color: #5477ac;
}

.nav-scroll {
    position: absolute;
    bottom: 4px;
    left: 0;
    width: 23px;
    height: 8px;
    border-radius: 0 4px 4px 0;
    background-color: #424242;
}

.prop-panel {
    display: flex;
    flex: none;
    flex-direction: column;
    width: 276px;
    margin: 0 4px;
    border-left: 1px solid #2d2d2d;
    border-right: 1px solid #2d2d2d;
}

.prop-tabs {
    display: flex;
    flex: none;
    height: 24px;
    background-color: #4a4a4a;
}

.prop-tab {
    width: 65px;
    padding-top: 2px;
    border-right: 1px solid #2d2d2d;
    background-color: #666;
    font-weight: bold;
}

.prop-tab.current {
    background-color: #4a4a4a;
}

.prop-body {
    display: flex;
    flex: 1;
    align-items: flex-end;
    min-height: 0;
    overflow: hidden;
    color: #d4d4d4;
}

.prop-table {
    width: 258px;
}

.prop-table th,
.prop-table td {
    height: 21px;
    padding: 0 0 0 3px;
    border-right: 1px solid #474747;
    border-bottom: 1px solid #474747;
    font-weight: normal;
    text-align: left;
    white-space: nowrap;
}

.prop-table th {
    width: 22px;
    background-color: #646464;
}

.prop-table td:nth-child(2) {
    width: 101px;
}

.prop-table .cut > * {
    height: 5px;
    border-bottom: none;
}

.expand {
    width: 13px;
    height: 13px;
    margin-right: 5px;
    border: 1px solid #2d2d2d;
    border-radius: 2px;
    font-size: 11px;
    line-height: 10px;
    vertical-align: 1px;
}

.prop-scroll {
    align-self: flex-end;
    width: 8px;
    height: 200px;
    margin: 0 0 35px 5px;
    border-radius: 4px;
    background-color: #424242;
}

.viewport {
    flex: 1;
    min-width: 0;
    overflow: hidden;
    background-color: #212121;
}

.scene {
    display: block;
    width: 100%;
    height: 100%;
}

.dimension {
    fill: #fff;
    font-family: "Noto Sans CJK SC", sans-serif;
    font-size: 18px;
}

.dimension .tip-text {
    fill: #333;
    font-family: "Liberation Serif", serif;
    font-size: 14px;
    font-style: italic;
}

.axis-name {
    font-family: "Liberation Sans", sans-serif;
    font-size: 16px;
}

.arrows {
    position: absolute;
    top: 0;
    left: 0;
    width: 100%;
    height: 100%;
    pointer-events: none;
}

/* ### 对话框 ### */
.dialog {
    position: absolute;
    top: 25px;
    bottom: 91px;
    left: 24px;
    display: flex;
    flex-direction: column;
    width: 752px;
    padding: 0 11px 6px;
    border: 1px solid #c5cad6;
    border-top: none;
    background-color: #f0f0f0;
    color: #000;
}

.title-bar {
    display: flex;
    flex: none;
    align-items: center;
    height: 27px;
    margin: 0 -12px;
    padding: 0 5px 0 9px;
    background-color: #386ba6;
    color: #fff;
}

.title-bar h1 {
    margin: 0 auto 0 0;
    font-size: 12px;
    font-weight: normal;
}

.window-button {
    width: 18px;
    height: 18px;
    margin-left: 10px;
}

.window-button svg {
    display: block;
    margin: 0 auto;
}

.tabs {
    display: flex;
    flex: none;
    align-items: flex-end;
    gap: 4px;
    height: 28px;
}

.tab {
    width: 72px;
    height: 20px;
    border-radius: 3px 3px 0 0;
    background-color: #dedede;
    color: #444;
}

.tab.current {
    position: relative;
    z-index: 1;
    width: 73px;
    height: 25px;
    margin-bottom: -1px;
    border: 1px solid #c0c4cc;
    border-bottom: none;
    background-color: #fff;
    color: #2b7fe0;
}

.page {
    display: flex;
    flex: 1;
    flex-direction: column;
    min-height: 0;
    padding-top: 9px;
    border: 1px solid #c6c6c6;
    background-color: #fff;
}

.pane {
    border: 1px solid #b4b4b4;
    border-radius: 3px;
}

.quantity-pane {
    position: relative;
    flex: none;
    height: 307px;
}

.options {
    display: flex;
    gap: 8px;
    height: 27px;
    padding-left: 6px;
}

.options label {
    display: flex;
    align-items: center;
    gap: 5px;
    height: 22px;
}

.options .off {
    color: #888;
}

.options input {
    appearance: none;
    position: relative;
    width: 13px;
    height: 13px;
    margin: 0;
    border: 1px solid #b5b5b5;
    border-radius: 50%;
    background-color: #fff;
}

.options input[type="radio"]:checked::after {
    content: "";
    position: absolute;
    inset: 2px;
    border-radius: 50%;
    background-color: #b8b8b8;
}

.options input[type="checkbox"] {
    width: 14px;
    height: 14px;
    margin-right: -2px;
    border-color: #4499f5;
    border-radius: 2px;
    background-color: #4499f5;
}

.options input[type="checkbox"]:disabled {
    border-color: #c8c8c8;
    background-color: #eee;
}

.options input[type="checkbox"]::after {
    content: "";
    position: absolute;
    top: 1px;
    left: 4px;
    width: 4px;
    height: 8px;
    border: solid #fff;
    border-width: 0 2px 2px 0;
    transform: rotate(45deg);
}

.options input[type="checkbox"]:disabled::after {
    border-color: #bbb;
}

.quantity-scroll {
    overflow: hidden;
}

.quantity {
    width: 739px;
    border-top: 1px solid #000;
    font-family: "Noto Sans CJK SC", sans-serif;
}

.quantity col {
    width: 61px;
}

.quantity .index-col {
    width: 7px;
}

.quantity th,
.quantity td {
    height: 19px;
    padding: 0 2px;
    border-right: 1px solid #000;
    border-bottom: 1px solid #000;
    font-weight: normal;
    line-height: 14px;
    white-space: nowrap;
}

.quantity td {
    font-size: 11px;
    text-align: right;
}

.quantity .sum td {
    font-family: "Liberation Mono", "Noto Sans CJK SC", monospace;
    font-size: 12px;
    font-weight: bold;
}

.quantity .index {
    padding: 0;
    border-color: #c4c4c4;
    background-color: #f0f0f0;
    color: #444;
    font-size: 12px;
}

.quantity .band th {
    height: 18px;
}

.quantity .names th {
    height: 61px;
    padding: 0;
}

.quantity .band .grade {
    font-weight: bold;
}

.quantity td.name {
    font-size: 12px;
    text-align: center;
}

.quantity td.start {
    padding: 0;
    text-align: left;
}

.quantity .total td {
    background-color: #e3e3e3;
}

.scroll-thumb {
    position: absolute;
    bottom: 3px;
    left: 98px;
    width: 232px;
    height: 8px;
    border-radius: 4px;
    background-color: #c9c9c9;
}

.splitter {
    flex: none;
    height: 5px;
    margin-bottom: 9px;
    background-color: #f0f0f0;
}

.detail-pane {
    display: flex;
    flex: 1;
    flex-direction: column;
    min-height: 0;
    border-bottom: none;
}

.detail-title {
    flex: none;
    height: 23px;
    line-height: 18px;
}

.detail-box {
    flex: 1;
    border: 1px solid #82878f;
    background: linear-gradient(#f0f0f0, #f0f0f0) 0 0 / 100% 17px no-repeat, linear-gradient(#f0f0f0, #f0f0f0) 0 0 / 7px 100% no-repeat, #cde8cf;
}

.detail {
    width: 247px;
}

.detail th,
.detail td {
    padding: 0 3px;
    border-right: 1px solid #d5dbe5;
    border-bottom: 1px solid #d5dbe5;
    text-align: left;
    white-space: nowrap;
}

.detail th {
    height: 17px;
    background-color: #80bafb;
    color: #fff;
    line-height: 15px;
    text-align: center;
}

.detail .index {
    width: 7px;
    padding: 0;
}

.detail tr:first-child .index {
    background-color: #f0f0f0;
}

.detail .part {
    width: 80px;
}

.detail td {
    height: 30px;
    background-color: #2a7fe0;
}

.actions {
    display: flex;
    flex: none;
    gap: 6px;
    height: 33px;
    padding: 7px 6px 0;
}

.action {
    width: 140px;
    height: 26px;
    border: 1px solid #ccc;
    border-radius: 3px;
    background-color: #fff;
}

.action.primary {
    width: 80px;
    margin-left: auto;
    border-color: #2a7fe0;
    background-color: #2a7fe0;
    color: #fff;
}

.grip {
    position: absolute;
    right: 2px;
    bottom: 2px;
}

/* ### 状态栏 ### */
.status-bar {
    position: relative;
    display: flex;
    flex: none;
    align-items: center;
    height: 30px;
    padding-top: 2px;
    background-color: #373737;
    border-bottom: 1px solid #cde8cf;
}

.status-text {
    display: grid;
    flex: none;
    grid-template-columns: 179px 83px 133px 103px 103px;
    white-space: nowrap;
}

.status-text .coords {
    text-indent: -3px;
}

.mode {
    display: flex;
    flex: none;
    align-items: center;
    justify-content: center;
    width: 25px;
    height: 25px;
    margin-right: 3px;
    border: 1px solid #2c2c2c;
}

.mode.wide {
    width: 36px;
    margin-right: 5px;
}

.mode:not(.on):not(.label):not(.wide) {
    margin-right: 6px;
}

.mode:nth-of-type(5) {
    margin-right: 2px;
}

.mode.label {
    width: auto;
    padding: 0 5px;
}

.mode.on {
    border-color: #2b6db5;
    background-color: #15385c;
}

.paw {
    position: absolute;
    bottom: 0;
    left: 225px;
}

/* ### 任务栏 ### */
.taskbar {
    display: flex;
    flex: none;
    height: 30px;
    padding-top: 3px;
    background: linear-gradient(90deg, #332f2b, #1f1e1d 70%, #121111);
}

.launcher {
    width: 62px;
    padding: 4px 0 0 24px;
}

.search {
    display: flex;
    align-items: center;
    width: 210px;
    padding-left: 5px;
    background-color: #ededed;
    color: #000;
}

.search > svg {
    margin-top: 6px;
}

.search .up {
    margin: 4px 4px 0;
    border: 3px solid transparent;
    border-top: 0;
    border-bottom-color: #999;
}

.search input {
    flex: 1;
    min-width: 0;
    padding: 5px 0 0;
    border: none;
    background: none;
}

.search button {
    align-self: stretch;
    width: 56px;
    padding-top: 5px;
    background-color: #1e87fb;
    color: #fff;
}

.divider {
    width: 5px;
    height: 16px;
    margin: 8px 11px 0 9px;
    border: solid #666;
    border-width: 0 1px;
}

.apps {
    display: flex;
    margin-top: -3px;
}

.apps a {
    width: 49px;
    padding: 8px 12px 0;
}

.apps .running {
    background-color: #484747;
}

.badge {
    fill: #fff;
    font-size: 10px;
    font-weight: bold;
}
```
